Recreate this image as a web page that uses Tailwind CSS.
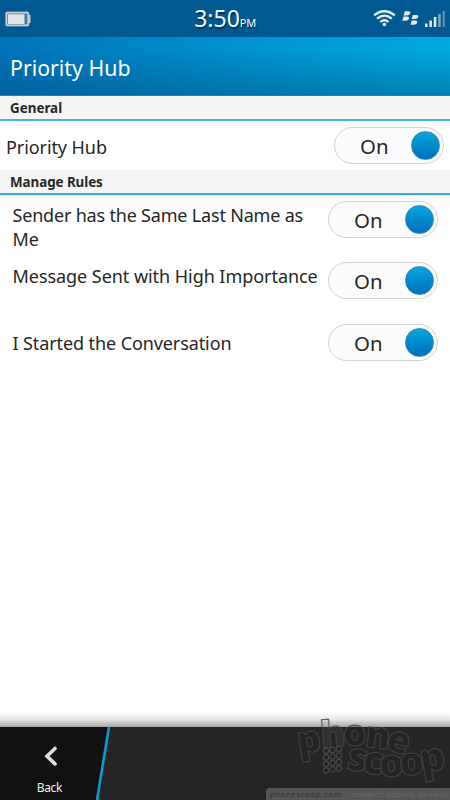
<!DOCTYPE html>
<html lang="en">
<head>
<meta charset="utf-8">
<title>Priority Hub</title>
<script src="https://cdn.jsdelivr.net/npm/@tailwindcss/browser@4"></script>
</head>
<body class="w-[450px] h-[800px] overflow-hidden bg-white font-['Noto_Sans',sans-serif] text-[#262626]">
<div class="flex flex-col w-[450px] h-[800px] whitespace-nowrap">
  <!-- Status bar -->
  <header class="h-[37px] shrink-0 bg-[#005a91] grid grid-cols-[1fr_auto_1fr] items-center text-[#f4f8fa]">
    <svg class="ml-[5px]" width="27" height="18" viewBox="0 0 27 18">
      <path d="M23 5h2.5v8H23z" fill="#c9cdd0"/>
      <rect x=".8" y="2" width="23" height="14" rx="1.2" fill="#d5d9dc" stroke="#b4c0c8" stroke-width=".8"/>
      <rect x="2.3" y="3.5" width="20" height="11" fill="#4c7894"/>
      <rect x="3" y="4.2" width="16.5" height="9.8" fill="#e1e3e5"/>
    </svg>
    <div class="flex items-baseline [text-shadow:1px_2px_1px_#003457]"><span class="text-[23px] leading-[37px]">3:50</span><span class="text-[11px] tracking-[-0.3px]">PM</span></div>
    <div class="flex justify-end pr-[4px]">
      <svg width="74" height="22" viewBox="372 8 74 22">
        <g fill="none" stroke="#e8ebed" stroke-width="2.3">
          <path d="M374 15.3q10.4-8.2 20.8 0M377 18.7q7.4-6.2 14.8 0M380.3 22q4.1-3.6 8.2 0"/>
        </g>
        <circle cx="384.4" cy="24.5" r="1.8" fill="#e8ebed"/>
        <g fill="#e8ebed">
          <path id="berry" d="M404.8 11.2h3.4q2.8 0 2 2.4-.5 1.8-3.2 1.8h-3.3z"/>
          <use href="#berry" x="-1.3" y="5.4"/>
          <use href="#berry" x="8" y="3.7"/>
          <use href="#berry" x="6.9" y="9.4"/>
          <path d="M425 23.5h2.5V27H425zM429.4 20.5h2.5V27h-2.5zM433.8 17h2.5v10h-2.5z"/>
          <path d="M438.2 14h2.5v13h-2.5z" fill="#82a9c3"/><path d="M442.6 11h2.2v16h-2.2z" fill="#5d91b4"/>
        </g>
      </svg>
    </div>
  </header>
  <!-- Title -->
  <div class="h-[59px] shrink-0 border-b border-[#40789b] bg-[linear-gradient(to_bottom,transparent_20%,#00446a60),linear-gradient(to_right,#0073bb,#0090cf_50%,#00a9e0)] pl-[10px] text-white text-[21.3px] leading-[62px]">Priority Hub</div>
  <!-- General -->
  <h2 class="h-[25px] shrink-0 bg-[#f5f5f5] border-b-2 border-[#45b5dc] pl-[10px] text-[13.4px] leading-[24px] font-bold">General</h2>
  <div class="h-[49px] shrink-0 flex justify-between pl-[6px] pr-[6px]">
    <span class="text-[18px] leading-[52px] tracking-[-0.08px]">Priority Hub</span>
    <div class="mt-[6px] h-[37px] w-[110px] rounded-full border-[1.5px] border-[#d2d2d2] bg-[#fcfcfc] flex items-center justify-between pl-[25px] pr-[3px]"><span class="pt-px text-[20.4px]">On</span><i class="size-[29px] rounded-full bg-linear-to-b from-[#0ba5db] to-[#006fc0] border border-[#238bbb]"></i></div>
  </div>
  <!-- Manage Rules -->
  <h2 class="h-[25px] shrink-0 bg-[#f5f5f5] border-b-2 border-[#38afda] pl-[10px] text-[13.4px] leading-[24px] tracking-[-0.06px] font-bold">Manage Rules</h2>
  <div class="h-[61px] shrink-0 flex justify-between pl-[12.5px] pr-[12px]">
    <span class="pt-[8px] text-[18px] leading-[24px] tracking-[-0.19px]">Sender has the Same Last Name as<br>Me</span>
    <div class="mt-[6px] h-[37px] w-[110px] rounded-full border-[1.5px] border-[#d2d2d2] bg-[#fcfcfc] flex items-center justify-between pl-[25px] pr-[3px]"><span class="pt-px text-[20.4px]">On</span><i class="size-[29px] rounded-full bg-linear-to-b from-[#0ba5db] to-[#006fc0] border border-[#238bbb]"></i></div>
  </div>
  <div class="h-[62px] shrink-0 flex justify-between pl-[12.5px] pr-[12px]">
    <span class="pt-[8px] text-[18px] leading-[24px] tracking-[-0.05px]">Message Sent with High Importance</span>
    <div class="mt-[6px] h-[37px] w-[110px] shrink-0 rounded-full border-[1.5px] border-[#d2d2d2] bg-[#fcfcfc] flex items-center justify-between pl-[25px] pr-[3px]"><span class="pt-px text-[20.4px]">On</span><i class="size-[29px] rounded-full bg-linear-to-b from-[#0ba5db] to-[#006fc0] border border-[#238bbb]"></i></div>
  </div>
  <div class="h-[62px] shrink-0 flex justify-between pl-[12.5px] pr-[12px]">
    <span class="pt-[13px] text-[18px] leading-[24px] tracking-[-0.1px]">I Started the Conversation</span>
    <div class="mt-[6px] h-[37px] w-[110px] rounded-full border-[1.5px] border-[#d2d2d2] bg-[#fcfcfc] flex items-center justify-between pl-[25px] pr-[3px]"><span class="pt-px text-[20.4px]">On</span><i class="size-[29px] rounded-full bg-linear-to-b from-[#0ba5db] to-[#006fc0] border border-[#238bbb]"></i></div>
  </div>
  <div class="grow flex items-end"><div class="w-full h-[15px] bg-linear-to-b from-white via-[#e5e5e5] to-[#a5a5a5]"></div></div>
  <!-- Action bar -->
  <footer class="relative h-[73px] shrink-0 bg-[#252525]">
    <svg class="block" width="110" height="73" viewBox="0 0 110 73">
      <path d="M0 0h109L97 73H0z" fill="#111"/>
      <path d="M109 0 97 73" stroke="#0b9bd2" stroke-width="2.6"/>
      <path d="m55 21.5-8 7.7 8 7.7" fill="none" stroke="#dedede" stroke-width="3.6" stroke-linecap="round"/>
      <text x="36.8" y="65" fill="#eee" font-family="Noto Sans" font-size="12" textLength="25.5">Back</text>
    </svg>
    <!-- Watermark -->
    <svg class="absolute left-[260px] top-[-35px] overflow-visible" width="190" height="108" viewBox="260 692 190 108" font-family="Open Sans, sans-serif" font-weight="800">
      <g fill="#202020" fill-opacity=".35" stroke="#454545" stroke-opacity=".85" stroke-width="1.1">
        <g font-size="37">
          <text transform="translate(299 754) rotate(-9)">p</text>
          <text transform="translate(321.5 748) rotate(-5)" fill="#888" fill-opacity=".15">h</text>
          <text transform="translate(343 746) rotate(0)">o</text>
          <text transform="translate(364.5 747) rotate(6)">n</text>
          <text transform="translate(385 750) rotate(13)">e</text>
        </g>
        <g font-size="39">
          <text transform="translate(346 769) rotate(9)">s</text>
          <text transform="translate(361.5 773) rotate(6)">c</text>
          <text transform="translate(379 776.5) rotate(0)">o</text>
          <text transform="translate(400 776) rotate(-5)">o</text>
          <text transform="translate(422 773) rotate(-10)">p</text>
        </g>
      </g>
      <g fill="#252525" stroke="#505050">
        <circle cx="326" cy="751" r="2.8"/><circle cx="332.5" cy="750" r="2.8"/><circle cx="339" cy="749" r="2.8"/>
        <circle cx="326" cy="757.5" r="2.8"/><circle cx="332.5" cy="756.5" r="2.8"/><circle cx="339" cy="755.5" r="2.8"/>
        <circle cx="326" cy="764" r="2.8"/><circle cx="332.5" cy="763" r="2.8"/><circle cx="339" cy="762" r="2.8"/>
        <circle cx="326" cy="770.5" r="2.8"/><circle cx="332.5" cy="769.5" r="2.8"/><circle cx="339" cy="768.5" r="2.8"/>
      </g>
      <path d="M266 800v-8q0-4 4-4h180v12z" fill="#555"/>
      <g font-family="DejaVu Sans" font-size="7.5" font-weight="400" stroke="none">
        <text x="270" y="797" fill="#303030" textLength="71">phonescoop.com</text>
        <text x="345" y="797" fill="#686868" textLength="102">– research phones, carriers</text>
      </g>
    </svg>
  </footer>
</div>
</body>
</html>
